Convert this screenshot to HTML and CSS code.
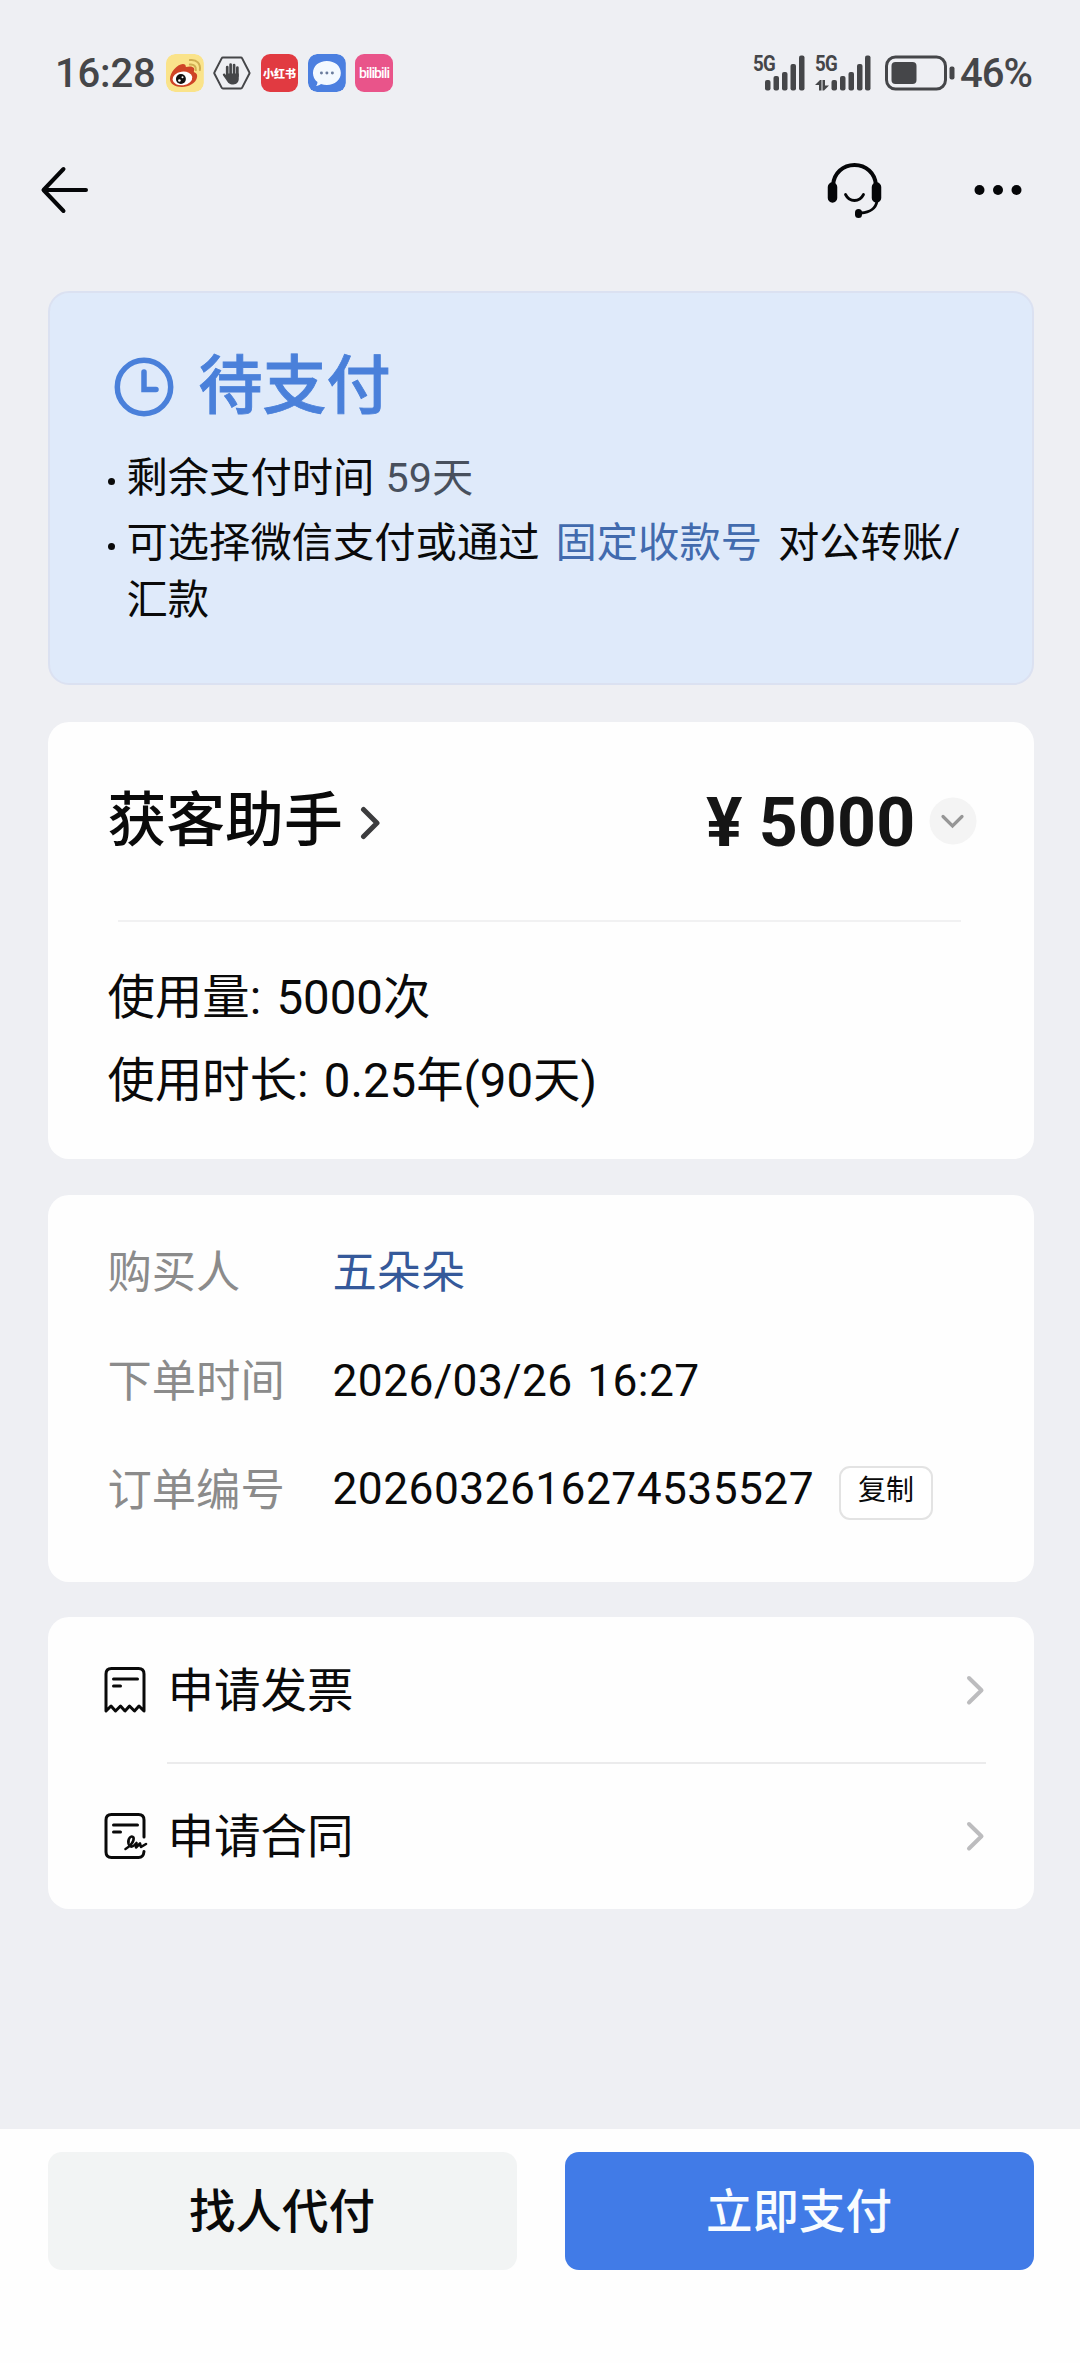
FILE: index.html
```html
<!DOCTYPE html>
<html lang="zh-CN">
<head>
<meta charset="utf-8">
<title>订单详情</title>
<link rel="stylesheet" href="styles.css">
</head>
<body>
<div class="screen">
  <header class="status">
    <span class="status-time">16:28</span>
    <div class="status-apps">
      <svg class="app" viewBox="0 0 38 38">
        <rect width="38" height="38" rx="9" fill="#fae38a"/>
        <path d="M4 25C4 19 11 10 17 10c2 0 3 1 3 3 3-1 7-1 8 1 1 1 0 3 0 4 3 1 4 3 3 6-1 5-8 9-15 9C9 33 4 30 4 25Z" fill="#cf4426"/>
        <ellipse cx="16.5" cy="24.5" rx="10" ry="6.8" fill="#fff" transform="rotate(-8 16.5 24.5)"/>
        <circle cx="15" cy="25" r="5" fill="#111"/><circle cx="13.5" cy="26.5" r="1.3" fill="#fff"/><circle cx="16.6" cy="23.3" r="1" fill="#fff"/>
        <path d="M24 6c7-1 11 4 10 10M24 10.5c4-.6 6.500 2 6 5.500" fill="none" stroke="#cfae52" stroke-width="2" stroke-linecap="round"/>
      </svg>
      <svg class="app" viewBox="0 0 38 38">
        <path d="M10 3.500h18a1.500 1.500 0 0 1 1.300.8L36.500 18.200a1.600 1.600 0 0 1 0 1.600L29.300 33.700a1.500 1.500 0 0 1-1.300.8H10a1.500 1.500 0 0 1-1.300-.8L1.500 19.800a1.600 1.600 0 0 1 0-1.600L8.700 4.300A1.500 1.500 0 0 1 10 3.500Z" fill="none" stroke="#454649" stroke-width="2"/>
        <path d="M14.300 23V13M17.700 21V10.500M21.200 21V11M24.500 22v-8.500" stroke="#454649" stroke-width="2.700" stroke-linecap="round"/>
        <path d="M13 19.500h12.900V25c0 3-2 5.500-5.500 5.500-4 0-5.400-1.700-7-4.500L10 21.200c-.6-1.200 1-2.300 2.100-1.200l1.600 2Z" fill="#454649"/>
      </svg>
      <span class="app app-red">小红书</span>
      <svg class="app" viewBox="0 0 38 38">
        <rect width="38" height="38" rx="9" fill="#4b7fe0"/>
        <path d="M19 7c8 0 14 5 14 12s-6 12-14 12c-2 0-4-.3-6-1-1 1-3 2-5 2 1-1 1.500-2.500 1.500-4C6.500 26 5 22.500 5 19 5 12 11 7 19 7Z" fill="#f3f9ff"/>
        <g fill="#6a7c9d"><circle cx="13.500" cy="19" r="1.500"/><circle cx="19" cy="19" r="1.500"/><circle cx="24.500" cy="19" r="1.500"/></g>
      </svg>
      <span class="app app-pink">bilibili</span>
    </div>
    <div class="status-right">
      <div class="signal">
        <span class="net">5G</span>
        <svg width="52" height="38" viewBox="0 0 52 38" fill="#454649">
          <rect x="12" y="26" width="5.500" height="10.500" rx="2"/><rect x="20.500" y="22" width="5.500" height="14.500" rx="2"/><rect x="29" y="18" width="5.500" height="18.500" rx="2"/><rect x="37.500" y="10" width="5.500" height="26.500" rx="2"/><rect x="46" y="1.500" width="5.500" height="35" rx="2"/>
        </svg>
      </div>
      <div class="signal">
        <span class="net">5G</span>
        <svg width="56" height="38" viewBox="0 0 56 38" fill="#454649">
          <path d="M0 31l5-5h1.500v10.500H4V31ZM7.500 26H10v5.500h4l-5 5H7.500Z"/>
          <rect x="16.500" y="26" width="5.500" height="10.500" rx="2"/><rect x="25" y="22" width="5.500" height="14.500" rx="2"/><rect x="33.500" y="18" width="5.500" height="18.500" rx="2"/><rect x="42" y="10" width="5.500" height="26.500" rx="2"/><rect x="50" y="1.500" width="5.500" height="35" rx="2"/>
        </svg>
      </div>
      <svg class="battery" width="70" height="38" viewBox="0 0 70 38">
        <rect x="1.500" y="3" width="59" height="32" rx="9" fill="none" stroke="#454649" stroke-width="3"/>
        <rect x="6.500" y="8" width="25" height="22" rx="4" fill="#454649"/>
        <rect x="64.500" y="12.500" width="5" height="13" rx="2" fill="#454649"/>
      </svg>
      <span class="percent">46%</span>
    </div>
  </header>

  <nav class="nav">
    <svg width="48" height="48" viewBox="0 0 48 48" fill="none" stroke="#050608" stroke-width="4" stroke-linecap="round" stroke-linejoin="round"><path d="M23.500 3 3.500 24l20 21M4 24h42"/></svg>
    <div class="nav-actions">
      <svg width="58" height="58" viewBox="0 0 58 58" fill="none" stroke="#050608" stroke-linecap="round">
        <path d="M7 24C8 12 17 4 28.500 4S49 12 50 24" stroke-width="4"/>
        <path d="M6.500 26v11M50.500 26v11" stroke-width="9.500"/>
        <path d="M19.500 33.500c4 8 14 8 18 0" stroke-width="2.800"/>
        <path d="M51 40c-1 7-7 11.500-16 12" stroke-width="2.800"/>
        <path d="M32.500 51.500v2" stroke-width="7"/>
      </svg>
      <svg width="48" height="12" viewBox="0 0 48 12" fill="#050608"><circle cx="5.500" cy="6" r="5"/><circle cx="24" cy="6" r="5"/><circle cx="42.500" cy="6" r="5"/></svg>
    </div>
  </nav>

  <main class="cards">
    <section class="card notice">
      <h1 class="notice-title">
        <svg width="60" height="60" viewBox="0 0 60 60" fill="none" stroke="#4a80da"><circle cx="30" cy="30" r="26.700" stroke-width="5.500"/><path d="M30 15v17.500h12" stroke-width="5.500" stroke-linecap="round" stroke-linejoin="miter"/></svg>
        <span>待支付</span>
      </h1>
      <ul class="notice-list">
        <li>剩余支付时间 <span class="days">59天</span></li>
        <li>可选择微信支付或通过<a class="account">固定收款号</a>对公转账/<br>汇款</li>
      </ul>
    </section>

    <section class="card">
      <div class="product">
        <h2 class="product-name">获客助手</h2>
        <svg class="product-more" width="22" height="36" viewBox="0 0 22 36" fill="none" stroke="#3c3c3e" stroke-width="5" stroke-linecap="round" stroke-linejoin="round"><path d="M3.500 4.500l13.500 13.500L3.500 31.500"/></svg>
        <span class="price"><span class="yen">¥</span>5000</span>
        <svg class="expand" width="48" height="48" viewBox="0 0 48 48"><circle cx="24" cy="24" r="23.500" fill="#f4f4f4"/><path d="M14 19.500l9.500 9.500L33 19.500" fill="none" stroke="#969696" stroke-width="3.200" stroke-linecap="round"/></svg>
      </div>
      <div class="usage">
        <p>使用量: 5000次</p>
        <p>使用时长: 0.25年(90天)</p>
      </div>
    </section>

    <section class="card order">
      <div class="field"><span class="label">购买人</span><a class="buyer">五朵朵</a></div>
      <div class="field"><span class="label">下单时间</span><span class="date">2026/03/26 16:27</span></div>
      <div class="field"><span class="label">订单编号</span><span class="number">2026032616274535527</span><button class="copy">复制</button></div>
    </section>

    <section class="card links">
      <a class="link">
        <svg width="44" height="48" viewBox="0 0 44 48" fill="none" stroke="#0a0a0a" stroke-width="3" stroke-linecap="round" stroke-linejoin="round"><path d="M2 45V8q0-5.500 5.500-5.500h27Q40 2.500 40 8v37l-5-5-4.500 5-5-5-4.500 5-4.500-5-5 5L7 40Z"/><path d="M9.500 13h24M9.500 20h7"/></svg>
        <span>申请发票</span>
        <svg class="go" width="20" height="32" viewBox="0 0 20 32"><path d="M4 4l12.500 12.300L4 28.500"/></svg>
      </a>
      <a class="link">
        <svg width="44" height="48" viewBox="0 0 44 48" fill="none" stroke="#0a0a0a" stroke-width="3" stroke-linecap="round" stroke-linejoin="round"><path d="M40 25V8q0-5.500-5.500-5.500h-27Q2 2.500 2 8v32q0 5.500 5.500 5.500h27q5 0 5.500-6"/><path d="M9.500 13h24M9.500 20h7"/><path d="M21.500 37c5-3 9-8 8-11.500-2-3-6 1-5 6 1 4 4 4.500 8-.5l-.5 4.500 4-4 1 3.500 5-3" stroke-width="2.600"/></svg>
        <span>申请合同</span>
        <svg class="go" width="20" height="32" viewBox="0 0 20 32"><path d="M4 4l12.500 12.300L4 28.500"/></svg>
      </a>
    </section>
  </main>

  <footer class="actions">
    <button class="btn btn-plain">找人代付</button>
    <button class="btn btn-primary">立即支付</button>
  </footer>
</div>
</body>
</html>
```
FILE: styles.css
```css
* { box-sizing: border-box; }
body, h1, h2, p, ul { margin: 0; padding: 0; }
body { background: #eeeff3; color: #0a0a0a; font-family: Roboto, "Noto Sans CJK SC", sans-serif; }
svg { display: block; flex: none; }
button { border: 0; padding: 0; font-family: inherit; color: inherit; }
.screen { width: 1080px; height: 2363px; display: flex; flex-direction: column; }

.status { height: 146px; padding: 0 48px 0 55px; display: flex; align-items: center; color: #454649; }
.status-time { width: 111px; font-size: 40px; font-weight: 500; letter-spacing: -0.2px; }
.status-apps { display: flex; gap: 9.500px; }
.app { width: 37.800px; height: 38px; flex: none; border-radius: 9px; }
.app-red, .app-pink { display: flex; align-items: center; justify-content: center; white-space: nowrap; color: #fff; }
.app-red { background: #e13a41; font-size: 11px; font-weight: 900; }
.app-pink { background: #e9548a; font-size: 14px; font-weight: 500; letter-spacing: -0.9px; }
.status-right { margin-left: auto; display: flex; align-items: center; }
.signal { position: relative; margin-right: 10.500px; }
.signal + .signal { margin-right: 14px; }
.net { position: absolute; left: 0; top: 0; font-size: 22px; line-height: 20px; font-weight: 700; letter-spacing: -1px; transform: scaleX(.85); transform-origin: left; }
.percent { margin-left: 5px; font-size: 40px; font-weight: 500; letter-spacing: -1px; }

.nav { height: 88px; padding: 0 40px; display: flex; align-items: center; justify-content: space-between; }
.nav-actions { display: flex; align-items: center; gap: 90px; padding-right: 18px; }

.cards { flex: 1; padding: 57px 46.500px 0 47.500px; display: flex; flex-direction: column; }
.card { background: #fefefe; border-radius: 21px; margin-bottom: 35.500px; }

.notice { height: 394px; margin-bottom: 37px; padding: 54px 0 0 64px; background: #dfeafa; border: 2px solid #dbe1f1; }
.notice-title { display: flex; align-items: center; gap: 25px; height: 80px; color: #4a80da; font-size: 64px; line-height: 80px; font-weight: 500; -webkit-text-stroke: .8px #4a80da; }
.notice-list { list-style: none; margin-top: 23px; font-size: 41.300px; line-height: 57px; }
.notice-list li { position: relative; padding-left: 13px; margin-bottom: 7.500px; white-space: nowrap; }
.notice-list li::before { content: ""; position: absolute; left: -5.500px; top: 28px; width: 7px; height: 7px; border-radius: 50%; background: #0a0a0a; }
.days { color: #48505d; margin-left: 1px; }
.account { color: #426bae; margin: 0 16px; }

.product { height: 198px; display: flex; align-items: center; padding: 0 57px 0 60px; }
.product-name { font-size: 58.800px; line-height: 80px; font-weight: 500; }
.product-more { margin: 4px 0 0 17px; }
.price { margin-left: auto; padding-top: 4px; font-size: 68px; line-height: 80px; font-weight: 700; letter-spacing: .2px; color: #151515; }
.yen { margin-right: 16px; }
.expand { margin-left: 13px; }
.usage { margin: 0 73px 0 70px; border-top: 2px solid #f1f1f2; padding: 35px 0 36px; }
.usage p { margin-left: -10px; font-size: 47.400px; line-height: 83px; word-spacing: 3.500px; white-space: nowrap; }

.order { padding: 23px 60px 38px; font-size: 44.300px; }
.field { height: 108.700px; display: flex; align-items: center; white-space: nowrap; }
.label, .buyer { padding-bottom: 5px; }
.label { width: 225px; color: #8b8b8b; }
.buyer { color: #35599a; }
.date, .number { letter-spacing: .45px; word-spacing: 3px; }
.copy { width: 94px; height: 54px; margin: 7px 0 0 25px; border: 2px solid #e3e3e3; border-radius: 11px; background: #fff; font-size: 28px; line-height: 46px; padding-bottom: 3px; }

.links { margin-bottom: 0; padding-left: 56px; }
.link { height: 146px; display: flex; align-items: center; font-size: 46.500px; }
.link span { flex: 1; align-self: stretch; margin-left: 19px; padding: 0 0 7px 1px; display: flex; align-items: center; }
.link + .link { position: relative; }
.link + .link::before { content: ""; position: absolute; left: 63px; right: 48px; top: -1px; height: 2px; background: #ebebec; }
.go { margin-right: 49px; fill: none; stroke: #bcbcbe; stroke-width: 4px; stroke-linecap: round; stroke-linejoin: round; }

.actions { height: 234px; padding: 23px 46.500px 0 47.500px; background: #fefefe; display: flex; gap: 48px; }
.btn { flex: 1; height: 118px; padding-bottom: 8px; border-radius: 14px; font-size: 46.500px; font-weight: 500; }
.btn-plain { background: #f2f4f4; }
.btn-primary { background: #417be7; color: #f8fcff; }
```
